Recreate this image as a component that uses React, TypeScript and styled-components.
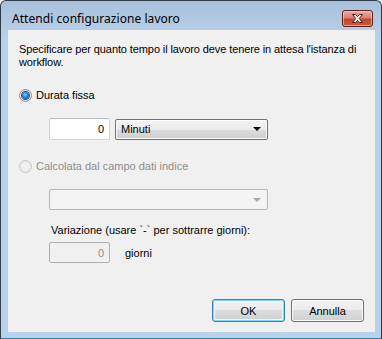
import React from "react";
import styled, { createGlobalStyle, css } from "styled-components";

const Global = createGlobalStyle`
  html, body { margin: 0; padding: 0; background: #ffffff; }
  * { box-sizing: border-box; }
`;

const FONT = `"Liberation Sans", Arial, sans-serif`;

const Window = styled.div`
  width: 382px;
  height: 339px;
  border: 1px solid #2e3b49;
  border-bottom-color: #2a8797;
  border-radius: 6px 6px 0 0;
  background: linear-gradient(180deg, #a8c0db 0px, #b6cde6 28px, #b9d1ea 40px, #b9d1ea 100%);
  display: flex;
  flex-direction: column;
  font-family: ${FONT};
  overflow: hidden;
`;

const TitleBar = styled.div`
  height: 29px;
  display: flex;
  align-items: flex-start;
  justify-content: space-between;
  padding: 0 8px 0 11px;
`;

const TitleText = styled.div`
  font-family: "Noto Sans", "Open Sans", sans-serif;
  font-size: 12px;
  letter-spacing: 0.05px;
  color: #000;
  margin-top: 10px;
  line-height: 16px;
`;

const CloseButton = styled.div`
  width: 31px;
  height: 17px;
  margin-top: 9px;
  border: 1px solid #5e1f18;
  border-radius: 3px;
  background: linear-gradient(180deg, #e8ab9d 0%, #d78470 45%, #c4442e 55%, #cf5a3e 100%);
  box-shadow: inset 0 0 0 1px rgba(255, 220, 210, 0.55);
  display: flex;
  align-items: center;
  justify-content: center;
`;

const Client = styled.div`
  flex: 1;
  margin: 0 6px 6px 7px;
  background: #f0f0f0;
  display: flex;
  flex-direction: column;
  padding: 13px 11px 10px 11px;
  font-size: 11px;
  color: #000;
`;

const Description = styled.div`
  line-height: 13px;
  white-space: nowrap;
  letter-spacing: -0.1px;
`;

const RadioRow = styled.label<{ $top: number; $disabled?: boolean }>`
  display: flex;
  align-items: center;
  gap: 4px;
  height: 13px;
  margin-top: ${(p) => p.$top}px;
  color: ${(p) => (p.$disabled ? "#8d8d8d" : "#000")};
  line-height: 13px;
`;

const RadioCircle = styled.span<{ $checked?: boolean; $disabled?: boolean }>`
  width: 13px;
  height: 13px;
  border-radius: 50%;
  border: 1px solid ${(p) => (p.$disabled ? "#c8c8c8" : "#8e8f8f")};
  background: ${(p) =>
    p.$disabled
      ? "radial-gradient(circle at 50% 50%, #f4f4f4 0%, #e6e6e6 100%)"
      : "radial-gradient(circle at 40% 35%, #ffffff 0%, #dcdcdc 100%)"};
  display: flex;
  align-items: center;
  justify-content: center;
  flex: none;
  ${(p) =>
    p.$checked &&
    css`
      &::after {
        content: "";
        width: 7px;
        height: 7px;
        border-radius: 50%;
        background: radial-gradient(circle at 45% 40%, #8fd0ff 0%, #2a7fd0 45%, #0c3e86 100%);
        box-shadow: 0 0 0 1px #1a4f8e;
      }
    `}
`;

const Indented = styled.div<{ $top: number }>`
  display: flex;
  align-items: center;
  margin-left: 30px;
  margin-top: ${(p) => p.$top}px;
`;

const TextBox = styled.div<{ $disabled?: boolean }>`
  width: 61px;
  height: ${(p) => (p.$disabled ? 21 : 22)}px;
  border: 1px solid ${(p) => (p.$disabled ? "#afafaf" : "#d0d3d8")};
  border-top-color: ${(p) => (p.$disabled ? "#afafaf" : "#b5b8bd")};
  background: ${(p) => (p.$disabled ? "#f0f0f0" : "#ffffff")};
  color: ${(p) => (p.$disabled ? "#8d8d8d" : "#000")};
  border-radius: 2px;
  display: flex;
  align-items: center;
  justify-content: flex-end;
  padding-right: 5px;
`;

const Select = styled.div<{ $disabled?: boolean; $width: number; $left?: number }>`
  width: ${(p) => p.$width}px;
  height: 21px;
  margin-left: ${(p) => p.$left ?? 0}px;
  border: 1px solid ${(p) => (p.$disabled ? "#b5b8bb" : "#707070")};
  border-radius: 2px;
  background: ${(p) =>
    p.$disabled
      ? "#f4f4f4"
      : "linear-gradient(180deg, #f2f2f2 0%, #ebebeb 50%, #dddddd 50%, #cfcfcf 100%)"};
  box-shadow: ${(p) => (p.$disabled ? "none" : "inset 0 0 0 1px #fcfcfc")};
  display: flex;
  align-items: center;
  justify-content: space-between;
  padding: 0 5px 0 5px;
  color: #000;
`;

const Arrow = styled.span<{ $disabled?: boolean }>`
  width: 0;
  height: 0;
  border-left: 4px solid transparent;
  border-right: 4px solid transparent;
  border-top: 4px solid ${(p) => (p.$disabled ? "#a8a8a8" : "#000")};
  margin-right: 1px;
`;

const Label = styled.div<{ $top: number }>`
  margin-left: 32px;
  margin-top: ${(p) => p.$top}px;
  line-height: 13px;
`;

const Unit = styled.span`
  margin-left: 15px;
`;

const ButtonRow = styled.div`
  margin-top: auto;
  display: flex;
  justify-content: flex-end;
  gap: 6px;
`;

const Button = styled.button<{ $default?: boolean }>`
  width: 73px;
  height: 23px;
  font-family: ${FONT};
  font-size: 11px;
  color: #000;
  border-radius: 3px;
  border: 1px solid ${(p) => (p.$default ? "#3c7fb1" : "#707070")};
  background: linear-gradient(180deg, #f2f2f2 0%, #ebebeb 50%, #dddddd 50%, #cfcfcf 100%);
  box-shadow: ${(p) =>
    p.$default ? "inset 0 0 0 1px #7fd6f7, inset 0 0 0 2px #eefaff" : "inset 0 0 0 1px #fcfcfc"};
  padding: 0;
`;

function CloseGlyph() {
  return (
    <svg width="13" height="11" viewBox="0 0 13 11">
      <path
        d="M1.5 1.5 H4.5 L6.5 3.7 L8.5 1.5 H11.5 L8.2 5.5 L11.5 9.5 H8.5 L6.5 7.3 L4.5 9.5 H1.5 L4.8 5.5 Z"
        fill="#ffffff"
        stroke="#4a1a14"
        strokeWidth="1"
        strokeLinejoin="round"
      />
    </svg>
  );
}

export default function App() {
  return (
    <>
      <Global />
      <Window>
        <TitleBar>
          <TitleText>Attendi configurazione lavoro</TitleText>
          <CloseButton>
            <CloseGlyph />
          </CloseButton>
        </TitleBar>
        <Client>
          <Description>
            Specificare per quanto tempo il lavoro deve tenere in attesa l'istanza di
            <br />
            workflow.
          </Description>
          <RadioRow $top={20}>
            <RadioCircle $checked />
            Durata fissa
          </RadioRow>
          <Indented $top={16}>
            <TextBox>0</TextBox>
            <Select $width={153} $left={5}>
              Minuti
              <Arrow />
            </Select>
          </Indented>
          <RadioRow $top={20} $disabled>
            <RadioCircle $disabled />
            Calcolata dal campo dati indice
          </RadioRow>
          <Indented $top={16}>
            <Select $width={219} $disabled>
              <span />
              <Arrow $disabled />
            </Select>
          </Indented>
          <Label $top={14}>Variazione (usare `-` per sottrarre giorni):</Label>
          <Indented $top={5}>
            <TextBox $disabled>0</TextBox>
            <Unit>giorni</Unit>
          </Indented>
          <ButtonRow>
            <Button $default>OK</Button>
            <Button>Annulla</Button>
          </ButtonRow>
        </Client>
      </Window>
    </>
  );
}
